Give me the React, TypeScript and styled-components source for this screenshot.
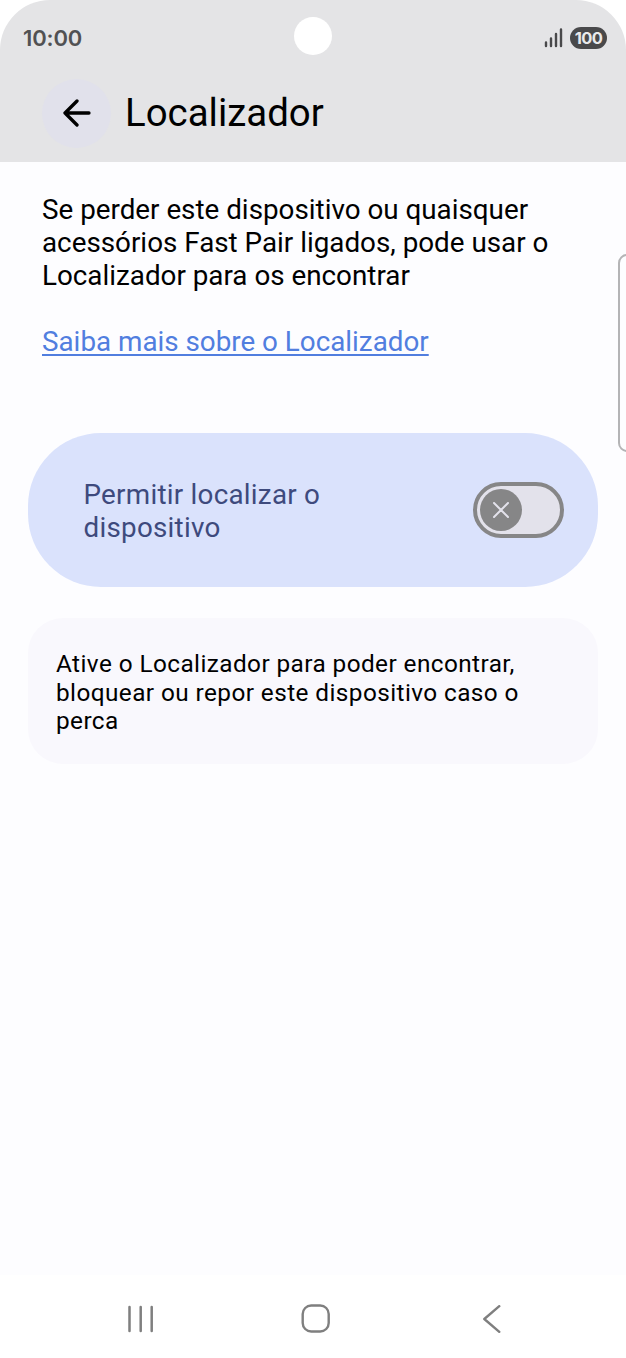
import React from 'react';
import styled, { createGlobalStyle } from 'styled-components';

const Global = createGlobalStyle`
  * { box-sizing: border-box; }
  body { margin: 0; background: #fff; font-family: Roboto, sans-serif; color: #000; }
  p, h1 { margin: 0; font-weight: 400; }
`;
const Screen = styled.div`
  position: relative; width: 626px; height: 1358px; display: flex; flex-direction: column;
  background: #fff; overflow: hidden;
`;
const Header = styled.header`
  height: 162px; background: #e4e4e6; border-radius: 50px 50px 0 0;
`;
const StatusBar = styled.div`
  height: 75px; padding: 0 19px 0 23px; display: flex; align-items: center;
`;
const Time = styled.span`flex: 0 0 271px; font-family: Inter, sans-serif; font-size: 22px; font-weight: 600; color: #515153; letter-spacing: -0.15px;`;
const Camera = styled.span`flex: none; width: 38px; height: 38px; border-radius: 50%; background: #fff; margin-top: -3px;`;
const Status = styled.div`flex: 1; display: flex; justify-content: flex-end; align-items: center; gap: 7px;`;
const Battery = styled.span`
  width: 37px; height: 22px; border-radius: 11px; background: #49494b; color: #e9e9ea;
  font-family: Inter, sans-serif; font-size: 16.5px; font-weight: 700; line-height: 22px; text-align: center; letter-spacing: -0.6px;
`;
const TitleBar = styled.div`display: flex; align-items: center; height: 76px; padding-left: 42px; gap: 14px;`;
const Back = styled.button`
  width: 69px; height: 69px; border: 0; border-radius: 50%; background: #e1e1eb; padding: 0;
  display: flex; align-items: center; justify-content: center;
`;
const Title = styled.h1`font-size: 38.4px; line-height: 46px;`;
const Main = styled.main`flex: 1; padding: 31px 28px 0; background: #fdfdff;`;
const Intro = styled.p`font-size: 27.8px; line-height: 33px; padding-left: 14px; white-space: pre-line;`;
const Link = styled.a`
  display: block; margin: 33px 0 0 14px; font-size: 27.8px; line-height: 33px; color: #517edf;
  text-decoration: underline; text-decoration-thickness: 1.5px; text-underline-offset: 3px; text-decoration-skip-ink: none;
`;
const ToggleCard = styled.section`
  margin-top: 74.5px; height: 154px; border-radius: 73px; background: #dae2fc; padding: 0 34.5px 0 55.5px;
  display: flex; align-items: center; justify-content: space-between;
`;
const ToggleLabel = styled.p`padding-top: 2px; font-size: 27.8px; line-height: 33px; letter-spacing: 0.25px; color: #3e4a7d; white-space: pre-line;`;
const Switch = styled.button`
  width: 91px; height: 56px; border: 4px solid #868687; border-radius: 28px; background: #e3e2eb; padding: 0 3px;
  display: flex; align-items: center;
`;
const Knob = styled.span`width: 42px; height: 42px; border-radius: 50%; background: #868687; display: flex; align-items: center; justify-content: center;`;
const Info = styled.p`
  margin-top: 31.5px; height: 146px; border-radius: 35px; background: #f9f8fd; padding: 32px 28px;
  font-size: 24.35px; line-height: 28.5px; letter-spacing: 0.42px; white-space: pre-line;
`;
const Nav = styled.nav`height: 83px; background: #fff; display: flex; align-items: center; justify-content: space-between; padding: 4px 125px 0 127px;`;
const HomeIcon = styled.svg`margin-right: 7px;`;
const EdgeHandle = styled.div`position: absolute; right: -12px; top: 254px; width: 20px; height: 198px; border: 2px solid #b4b4b6; border-radius: 9px; background: #fdfdff;`;

export default function App() {
  return (
    <Screen>
      <Global />
      <Header>
        <StatusBar>
          <Time>10:00</Time>
          <Camera />
          <Status>
            <svg width="20" height="20" viewBox="0 0 20 20" stroke="#49494b" strokeWidth="2.4" strokeLinecap="round">
              <path d="M3 18v-3.500M8 18V10.500M13 18V6M18 18V1.500" />
            </svg>
            <Battery>100</Battery>
          </Status>
        </StatusBar>
        <TitleBar>
          <Back aria-label="Voltar">
            <svg width="28" height="28" viewBox="0 0 28 28" fill="none" stroke="#000" strokeWidth="3.300" strokeLinecap="round" strokeLinejoin="round">
              <path d="M26 14H2M14 2L2 14l12 12" />
            </svg>
          </Back>
          <Title>Localizador</Title>
        </TitleBar>
      </Header>
      <Main>
        <Intro>{'Se perder este dispositivo ou quaisquer\nacessórios Fast Pair ligados, pode usar o\nLocalizador para os encontrar'}</Intro>
        <Link>Saiba mais sobre o Localizador</Link>
        <ToggleCard>
          <ToggleLabel>{'Permitir localizar o\ndispositivo'}</ToggleLabel>
          <Switch role="switch" aria-checked="false">
            <Knob>
              <svg width="16" height="16" viewBox="0 0 16 16" stroke="#e3e2eb" strokeWidth="2" strokeLinecap="round">
                <path d="M1 1l14 14M15 1L1 15" />
              </svg>
            </Knob>
          </Switch>
        </ToggleCard>
        <Info>{'Ative o Localizador para poder encontrar,\nbloquear ou repor este dispositivo caso o\nperca'}</Info>
      </Main>
      <Nav>
        <svg width="28" height="28" viewBox="0 0 28 28" stroke="#7f7f7f" strokeWidth="2.500" strokeLinecap="round">
          <path d="M2.500 2v24M13.700 2v24M24.700 2v24" />
        </svg>
        <HomeIcon width="29" height="29" viewBox="0 0 29 29" fill="none" stroke="#7f7f7f" strokeWidth="2.400">
          <rect x="1.700" y="1.500" width="26" height="26" rx="8.500" />
        </HomeIcon>
        <svg width="19" height="28" viewBox="0 0 19 28" fill="none" stroke="#7f7f7f" strokeWidth="2.400" strokeLinecap="round" strokeLinejoin="round">
          <path d="M17.300 1.200L2.300 14L17.300 26.800" />
        </svg>
      </Nav>
      <EdgeHandle />
    </Screen>
  );
}
